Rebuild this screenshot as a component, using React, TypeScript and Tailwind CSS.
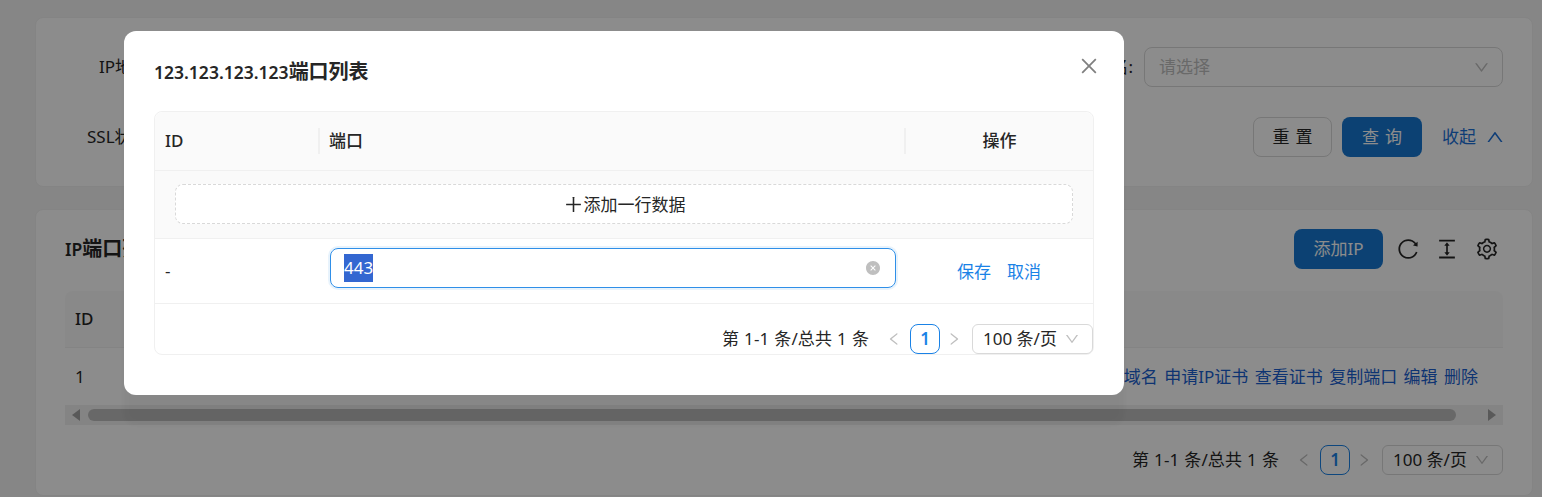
import React from 'react'
import {
  AiOutlineReload,
  AiOutlineColumnHeight,
  AiOutlineSetting,
  AiOutlineClose,
  AiOutlineDown,
  AiOutlineUp,
  AiOutlineLeft,
  AiOutlineRight,
  AiFillCloseCircle,
  AiOutlinePlus,
} from 'react-icons/ai'

const Pager = () => (
  <div className="flex items-center h-[30px] text-[17px] text-[#262626]">
    <span className="mr-[17px] tracking-[0.1px] [word-spacing:0.5px]">第 1-1 条/总共 1 条</span>
    <AiOutlineLeft className="w-[16px] h-[16px] text-[#bfbfbf] mr-[8px]" />
    <span className="w-[30px] h-[30px] flex items-center justify-center rounded-lg border border-[#1a82e6] text-[#1a82e6] font-semibold">
      1
    </span>
    <AiOutlineRight className="w-[16px] h-[16px] text-[#bfbfbf] ml-[6px] mr-[10px]" />
    <div className="w-[121px] h-[30px] flex items-center justify-between pl-[10px] pr-[12px] rounded-md border border-[#d9d9d9]">
      <span>100 条/页</span>
      <AiOutlineDown className="w-[16px] h-[16px] text-[#bfbfbf]" />
    </div>
  </div>
)

const BackgroundPage = () => (
  <div className="pt-[17px] pl-[35px] pr-[9px]">
    <div className="h-[170px] rounded-lg bg-white border border-[#f0f0f0] pt-[29px] pr-[29px] pl-[63px] text-[17px] text-[#262626]">
      <div className="flex items-center h-[40px]">
        <span>IP地址:</span>
        <span className="ml-auto mr-[11px]">域名:</span>
        <div className="w-[359px] h-[40px] flex items-center justify-between pl-[14px] pr-[12px] rounded-lg border border-[#d9d9d9] text-[#bfbfbf]">
          <span>请选择</span>
          <AiOutlineDown className="w-[17px] h-[17px]" />
        </div>
      </div>
      <div className="flex items-center h-[40px] mt-[30px]">
        <span className="-ml-[12px]">SSL状态:</span>
        <button className="ml-auto w-[79px] h-[40px] rounded-lg border border-[#d9d9d9] tracking-[6px] pl-[6px]">重置</button>
        <button className="ml-[10px] w-[80px] h-[40px] rounded-lg bg-[#1677d2] text-white tracking-[6px] pl-[6px]">查询</button>
        <span className="ml-[20px] text-[#1a6fd8]">收起</span>
        <AiOutlineUp className="ml-[9px] -mr-[2px] w-[20px] h-[20px] text-[#1a6fd8]" />
      </div>
    </div>
    <div className="mt-[22px] h-[287px] rounded-lg bg-white border border-[#f0f0f0] pt-[19px] pl-[29px] pr-[29px]">
      <div className="flex items-center h-[40px]">
        <span className="font-semibold text-[#262626] text-[20px]">
          <span className="text-[17.5px]">IP</span>端口列表
        </span>
        <button className="ml-auto w-[89px] h-[40px] rounded-lg bg-[#1677d2] text-white text-[17px]">添加IP</button>
        <AiOutlineReload className="ml-[13px] w-[24px] h-[24px] text-[#262626]" />
        <AiOutlineColumnHeight className="ml-[15px] w-[24px] h-[24px] text-[#262626]" />
        <AiOutlineSetting className="ml-[16px] mr-[4px] w-[24px] h-[24px] text-[#262626]" />
      </div>
      <div className="mt-[22px] h-[57px] flex items-center rounded-t-lg bg-[#fafafa] border-b border-[#f0f0f0] pl-[10px] text-[17px] font-medium text-[#262626]">
        ID
      </div>
      <div className="h-[57px] flex items-center justify-between pl-[10px] pr-[25px] text-[17px] text-[#262626]">
        <span>1</span>
        <span className="text-[#1a5fd0] whitespace-pre [word-spacing:2px]">绑定域名 申请IP证书 查看证书 复制端口 编辑 删除</span>
      </div>
      <div className="h-[20px] flex items-center bg-[#f1f1f1]">
        <span className="ml-[7px] w-0 h-0 border-y-[6px] border-y-transparent border-r-[8px] border-r-[#a3a3a3]" />
        <div className="ml-[8px] w-[1368px] h-[12px] rounded-full bg-[#bebebe]" />
        <span className="ml-auto mr-[7px] w-0 h-0 border-y-[6px] border-y-transparent border-l-[8px] border-l-[#a3a3a3]" />
      </div>
      <div className="mt-[20px] flex justify-end">
        <Pager />
      </div>
    </div>
  </div>
)

const PortModal = () => (
  <div className="ml-[124px] mt-[31px] w-[1000px] h-[364px] rounded-xl bg-white pt-[25px] px-[30px] relative shadow-[0_30px_4px_0_rgba(0,0,0,0.03)]">
    <h2 className="h-[32px] leading-[32px] text-[20px] font-semibold text-[#262626]">
      <span className="text-[17.5px]">123.123.123.123</span>端口列表
    </h2>
    <AiOutlineClose className="absolute right-[24px] top-[24px] w-[22px] h-[22px] text-[#7f7f7f]" />
    <div className="mt-[23px] h-[244px] rounded-lg border border-[#f0f0f0] text-[17px] text-[#262626]">
      <div className="h-[59px] flex items-center rounded-t-lg bg-[#fafafa] border-b border-[#f0f0f0] font-medium">
        <div className="w-[165px] pl-[10px] h-[26px] leading-[26px] border-r-2 border-[#f0f0f0]">ID</div>
        <div className="w-[586px] pl-[9px] h-[26px] leading-[26px] border-r-2 border-[#f0f0f0]">端口</div>
        <div className="flex-1 text-center">操作</div>
      </div>
      <div className="h-[68px] bg-[#fafafa] border-b border-[#f0f0f0] flex items-start justify-center pt-[13px]">
        <div className="w-[898px] h-[40px] rounded-lg border border-dashed border-[#d9d9d9] bg-white flex items-center justify-center">
          <AiOutlinePlus className="w-[21px] h-[21px]" />
          <span className="pt-px">添加一行数据</span>
        </div>
      </div>
      <div className="h-[65px] border-b border-[#f0f0f0] flex items-center">
        <div className="w-[165px] pl-[10px]">-</div>
        <div className="w-[586px] pl-[10px] mb-[6px]">
          <div className="w-[566px] h-[40px] rounded-lg border border-[#2f8fe8] shadow-[0_0_0_2px_rgba(30,136,229,0.1)] flex items-center justify-between pl-[13px] pr-[14px]">
            <span className="h-[28px] leading-[28px] bg-[#3367d1] text-white">443</span>
            <AiFillCloseCircle className="w-[16px] h-[16px] text-[#bfbfbf]" />
          </div>
        </div>
        <div className="flex-1 flex justify-center gap-[16px] text-[#1a82e6] pr-[1px] pt-px">
          <span>保存</span>
          <span>取消</span>
        </div>
      </div>
      <div className="mt-[20px] flex justify-end">
        <Pager />
      </div>
    </div>
  </div>
)

export default function App() {
  return (
    <div
      className="relative w-[1542px] h-[497px] overflow-hidden bg-[#f5f5f5]"
      style={{ fontFamily: '"Noto Sans", "Noto Sans CJK SC", sans-serif' }}
    >
      <BackgroundPage />
      <div className="absolute inset-0 bg-black/45 flow-root">
        <PortModal />
      </div>
    </div>
  )
}
